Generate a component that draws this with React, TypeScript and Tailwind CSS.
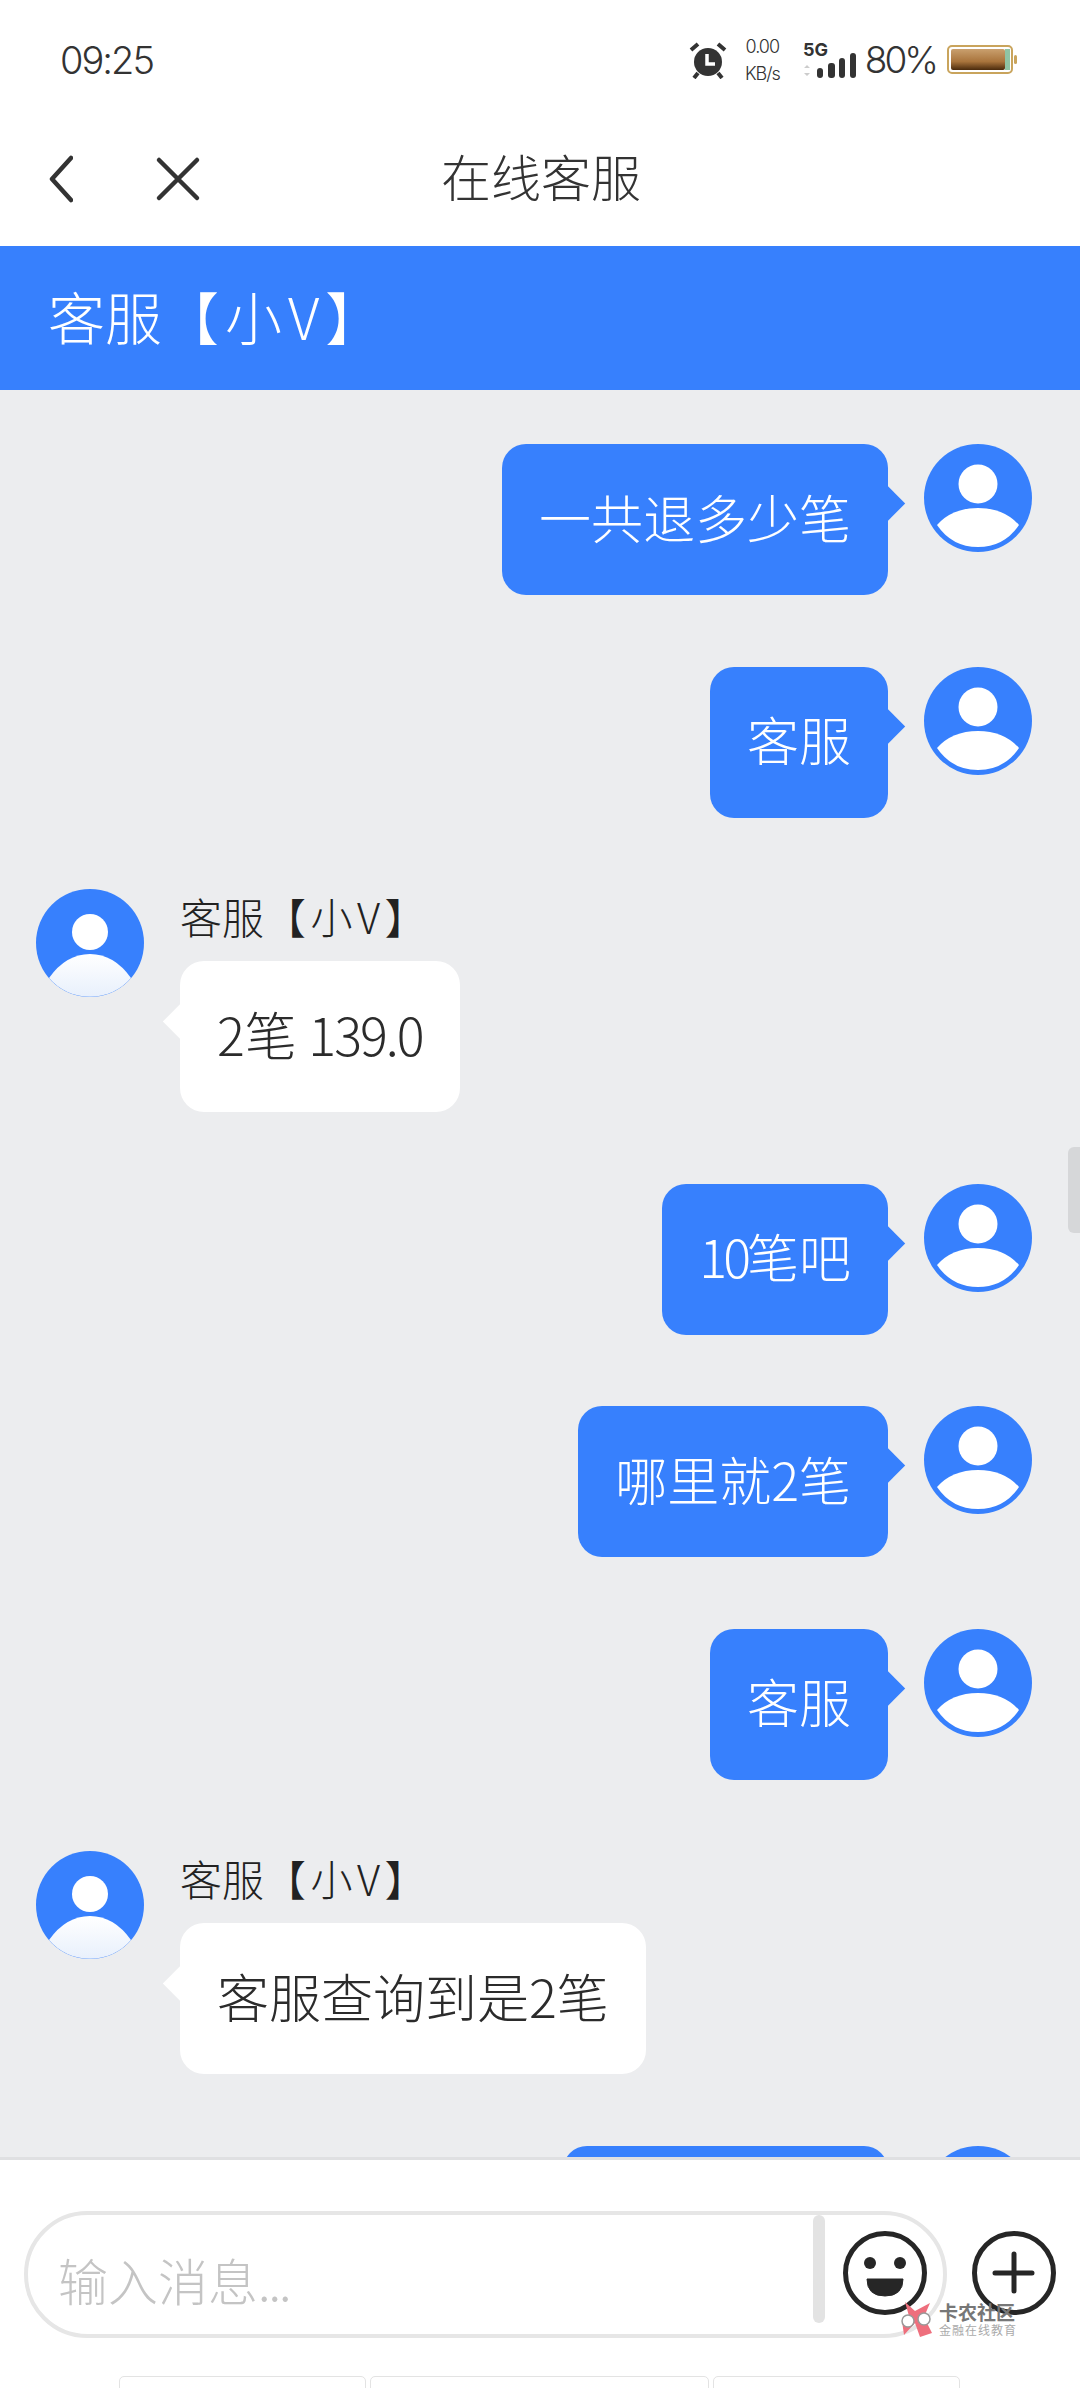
import React from 'react';

const cjk = "font-['Noto_Sans_CJK_SC','Noto_Sans',sans-serif]";

interface Message {
  from: 'me' | 'agent';
  text: string;
  // digits that sit tighter than the font's own spacing
  before?: string;
  tight?: string;
  after?: string;
  tightClass?: string;
}

const messages: Message[] = [
  { from: 'me', text: '一共退多少笔' },
  { from: 'me', text: '客服' },
  { from: 'agent', text: '', before: '2笔 ', tight: '139.0', tightClass: 'tracking-[-2px]' },
  { from: 'me', text: '', tight: '10', after: '笔吧', tightClass: 'tracking-[-4px]' },
  { from: 'me', text: '哪里就2笔' },
  { from: 'me', text: '客服' },
  { from: 'agent', text: '客服查询到是2笔' },
  { from: 'me', text: '' },
];

const MyAvatar = () => (
  <svg width="108" height="108" viewBox="0 0 108 108" className="shrink-0">
    <circle cx="54" cy="54" r="54" fill="#3780fd" />
    <circle cx="54" cy="40" r="19.5" fill="#fff" />
    <path d="M13 81 Q28 64 54 64 Q80 64 95 81 Q80 103 54 103 Q28 103 13 81 Z" fill="#fff" />
  </svg>
);

const AgentAvatar = () => (
  <svg width="108" height="108" viewBox="0 0 108 108" className="shrink-0">
    <defs>
      <linearGradient id="agentBody" x1="0" y1="0" x2="0" y2="1">
        <stop offset="0" stopColor="#ffffff" />
        <stop offset="1" stopColor="#e8f0fc" />
      </linearGradient>
    </defs>
    <circle cx="54" cy="54" r="54" fill="#3780fd" />
    <circle cx="54" cy="43" r="18" fill="#fff" />
    <path d="M13 89 Q30 65 54 65 Q78 65 95 89 A54 54 0 0 1 13 89 Z" fill="url(#agentBody)" />
  </svg>
);

const StatusBar = () => (
  <div className="h-[120px] flex items-center justify-between pl-[60px] pr-[61px] bg-white text-[#333] font-['Inter',sans-serif]">
    <span className="text-[38px] font-light tracking-[-2px]">09:25</span>
    <div className="flex items-center">
      <svg width="38" height="38" viewBox="0 0 38 38">
        <circle cx="19" cy="21" r="14" fill="#333" />
        <path d="M2 9 L9 3 M36 9 L29 3" stroke="#333" strokeWidth="4" />
        <path d="M9 32 L5 37 M29 32 L33 37" stroke="#333" strokeWidth="4" />
        <path d="M18 13 V23 H26" stroke="#fff" strokeWidth="3.5" fill="none" />
      </svg>
      <div className="ml-[17px] w-[37px] flex flex-col items-center text-[18px] font-light leading-[27px] tracking-[-1px] -mt-[1px]">
        <span>0.00</span>
        <span>KB/s</span>
      </div>
      <svg width="54" height="40" viewBox="0 0 54 40" className="ml-[22px]">
        <text x="0" y="16" fontSize="18" fontWeight="700" fill="#333" fontFamily="Inter">5G</text>
        <path d="M4 25 L7 28 H1 Z M4 36 L7 33 H1 Z" fill="#ccc" />
        <rect x="14" y="28" width="6" height="10" rx="3" fill="#333" />
        <rect x="25" y="23" width="7" height="15" rx="3" fill="#333" />
        <rect x="36" y="18" width="6" height="20" rx="3" fill="#333" />
        <rect x="47" y="13" width="6" height="25" rx="3" fill="#333" />
      </svg>
      <span className="ml-[8px] text-[37px] font-light tracking-[-3px]">80%</span>
      <svg width="72" height="30" viewBox="0 0 72 30" className="ml-[11px]">
        <defs>
          <linearGradient id="battery" x1="0" y1="0" x2="0" y2="1">
            <stop offset="0" stopColor="#c9a06e" />
            <stop offset="0.6" stopColor="#a9743c" />
            <stop offset="1" stopColor="#4a2a0c" />
          </linearGradient>
        </defs>
        <rect x="1" y="1" width="64" height="27" rx="4" fill="#fff" stroke="#c9a45c" strokeWidth="2" />
        <rect x="4" y="4" width="54" height="21" rx="2" fill="url(#battery)" />
        <rect x="58" y="4" width="5" height="21" fill="#8fc4a4" />
        <rect x="67" y="10" width="3" height="9" rx="1.5" fill="#c9a45c" />
      </svg>
    </div>
  </div>
);

const Bubble = ({ message }: { message: Message }) => {
  const mine = message.from === 'me';
  const empty = !message.text && !message.tight;
  return (
    <div
      className={
        'relative h-[151px] flex items-center px-[37px] pb-[6px] rounded-[24px] text-[52px] font-light ' +
        (mine ? 'bg-[#3780fd] text-white' : 'bg-white text-[#2b2b2b]') +
        (empty ? ' w-[325px]' : '')
      }
    >
      <span
        className={
          'absolute w-[25px] h-[25px] rotate-45 ' +
          (mine ? 'bg-[#3780fd] -right-[12px] top-[47px]' : 'bg-white -left-[12px] top-[48px]')
        }
      />
      <span className="relative whitespace-pre">
        {message.text}
        {message.before}
        {message.tight && <span className={message.tightClass}>{message.tight}</span>}
        {message.after}
      </span>
    </div>
  );
};

const Row = ({ message }: { message: Message }) => {
  if (message.from === 'me') {
    return (
      <div className="flex justify-end gap-[36px] pr-[48px]">
        <Bubble message={message} />
        <MyAvatar />
      </div>
    );
  }
  return (
    <div className="flex gap-[36px] pl-[36px]">
      <AgentAvatar />
      <div className="flex flex-col items-start">
        <div className="h-[72px] -mt-[9px] mb-[9px] flex items-center text-[42px] font-light text-[#222] leading-none whitespace-nowrap">
          客服<span className="tracking-[4.5px]">【小V】</span>
        </div>
        <Bubble message={message} />
      </div>
    </div>
  );
};

export default function App() {
  return (
    <div className={`relative w-[1080px] h-[2388px] overflow-hidden flex flex-col bg-white ${cjk}`}>
      <StatusBar />

      <div className="h-[126px] shrink-0 flex items-center pb-[8px] bg-white relative">
        <svg width="24" height="48" viewBox="0 0 24 48" className="ml-[49px]">
          <path d="M22 3 L3 24 L22 45" stroke="#333" strokeWidth="4.5" fill="none" strokeLinecap="round" strokeLinejoin="round" />
        </svg>
        <svg width="46" height="46" viewBox="0 0 46 46" className="ml-[82px]">
          <path d="M4 4 L42 42 M42 4 L4 42" stroke="#333" strokeWidth="4.5" fill="none" strokeLinecap="round" />
        </svg>
        <span className="absolute left-[441px] top-[22px] text-[50px] font-light leading-[66px] text-[#333]">在线客服</span>
      </div>

      <div className="h-[144px] shrink-0 flex items-center pl-[48px] pb-[6px] bg-[#3780fd] text-white text-[57px] font-light leading-none">
        客服<span className="tracking-[6px]">【小V】</span>
      </div>

      <div className="relative flex-1 min-h-0 overflow-hidden bg-[#ecedef] pt-[54px] flex flex-col gap-[71.5px]">
        {messages.map((m, i) => (
          <Row key={i} message={m} />
        ))}
        <div className="absolute right-0 top-[757px] w-[12px] h-[86px] rounded-l-[6px] bg-[#d6d7d9]" />
      </div>

      <div className="relative h-[231px] shrink-0 bg-white border-t-[3px] border-[#dfe0e2]">
        <div className="absolute left-[24px] top-[51px] w-[923px] h-[127px] rounded-[64px] border-[4px] border-[#e6e6e6] flex items-center">
          <span className="ml-[30px] mt-[8px] text-[50px] font-light text-[#c4c4c4] leading-none">
            输入消息<span className="tracking-[-2px]">...</span>
          </span>
          <div className="absolute left-[785px] top-[0px] w-[12px] h-[108px] rounded-full bg-[#e3e3e3]" />
        </div>

        <svg width="84" height="84" viewBox="0 0 84 84" className="absolute left-[843px] top-[71px]">
          <circle cx="42" cy="42" r="39.5" fill="none" stroke="#262626" strokeWidth="5" />
          <circle cx="27" cy="32" r="6" fill="#262626" />
          <circle cx="57" cy="32" r="6" fill="#262626" />
          <path d="M24 48 H60 Q60 65 42 65 Q24 65 24 48 Z" fill="#262626" stroke="#262626" strokeWidth="1" strokeLinejoin="round" />
        </svg>
        <svg width="84" height="84" viewBox="0 0 84 84" className="absolute left-[972px] top-[71px]">
          <circle cx="42" cy="42" r="39.5" fill="none" stroke="#262626" strokeWidth="5" />
          <path d="M42 23 V60 M23 42 H60" stroke="#262626" strokeWidth="5" strokeLinecap="round" />
        </svg>

        <div className="absolute left-[900px] top-[141px] flex items-center gap-[6px]">
          <svg width="33" height="36" viewBox="0 0 33 36">
            <path d="M5 1 L15 10 L30 2 L24 16 L32 32 L20 36 L15 22 L4 34 L2 20 L9 15 Z" fill="#ee6f7d" />
            <circle cx="8" cy="20" r="6" fill="#fff" stroke="#999" strokeWidth="1.5" />
            <circle cx="24" cy="18" r="6" fill="#fff" stroke="#999" strokeWidth="1.5" />
          </svg>
          <div className="flex flex-col items-start leading-none whitespace-nowrap">
            <span className="text-[19px] font-bold text-[#777] h-[22px]">卡农社区</span>
            <span className="text-[12px] tracking-[1px] text-[#aaa]">金融在线教育</span>
          </div>
        </div>

        <div className="absolute left-[119px] top-[216px] flex gap-[4px]">
          <div className="w-[247px] h-[20px] rounded-[5px] border border-[#e3e3e3]" />
          <div className="w-[339px] h-[20px] rounded-[5px] border border-[#e3e3e3]" />
          <div className="w-[247px] h-[20px] rounded-[5px] border border-[#e3e3e3]" />
        </div>
      </div>
    </div>
  );
}
